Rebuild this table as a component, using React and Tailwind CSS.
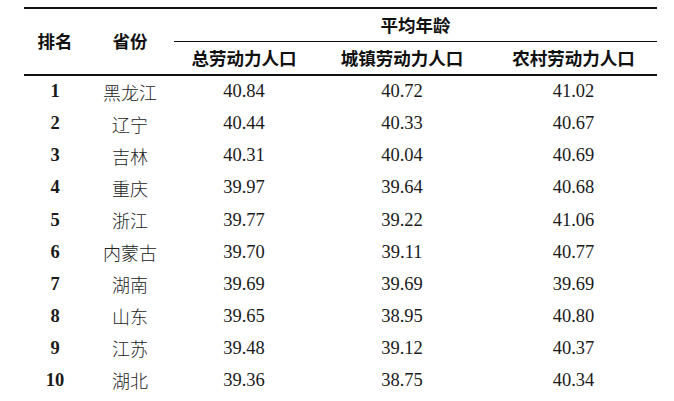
import React from "react";

const rows = [
  ["1", "黑龙江", "40.84", "40.72", "41.02"],
  ["2", "辽宁", "40.44", "40.33", "40.67"],
  ["3", "吉林", "40.31", "40.04", "40.69"],
  ["4", "重庆", "39.97", "39.64", "40.68"],
  ["5", "浙江", "39.77", "39.22", "41.06"],
  ["6", "内蒙古", "39.70", "39.11", "40.77"],
  ["7", "湖南", "39.69", "39.69", "39.69"],
  ["8", "山东", "39.65", "38.95", "40.80"],
  ["9", "江苏", "39.48", "39.12", "40.37"],
  ["10", "湖北", "39.36", "38.75", "40.34"],
];

const head = "[font-family:'Noto_Sans_CJK_SC',sans-serif] font-bold text-[17.5px] text-[#111]";
const num = "[font-family:'Liberation_Serif','Times_New_Roman',serif] text-[18.5px] text-[#1a1a1a]";

export default function App() {
  return (
    <div className="w-[674px] h-[401px] bg-white overflow-hidden pt-[7px] pl-[24px]">
      <div className="w-[633px] border-t-2 border-[#111]">
        {/* header */}
        <div className="grid grid-cols-[62px_88px_140px_176px_167px] border-b-[2.5px] border-[#111]">
          <div className={`row-span-2 flex items-center justify-center ${head}`}>排名</div>
          <div className={`row-span-2 flex items-center justify-center ${head}`}>省份</div>
          <div className={`col-span-3 h-[33px] flex items-center justify-center border-b-[1.5px] border-[#111] pt-[1px] ${head}`}>
            平均年龄
          </div>
          <div className={`h-[32px] flex items-center justify-center ${head}`}>总劳动力人口</div>
          <div className={`h-[32px] flex items-center justify-center ${head}`}>城镇劳动力人口</div>
          <div className={`h-[32px] flex items-center justify-center ${head}`}>农村劳动力人口</div>
        </div>
        {/* body */}
        {rows.map((r) => (
          <div key={r[0]} className="grid grid-cols-[62px_88px_140px_176px_167px] h-[32.1px] items-center text-center">
            <div className={`${num} font-bold`}>{r[0]}</div>
            <div className="[font-family:'Noto_Sans_CJK_SC',sans-serif] font-light text-[18px] text-[#222]">{r[1]}</div>
            <div className={num}>{r[2]}</div>
            <div className={num}>{r[3]}</div>
            <div className={num}>{r[4]}</div>
          </div>
        ))}
      </div>
    </div>
  );
}
